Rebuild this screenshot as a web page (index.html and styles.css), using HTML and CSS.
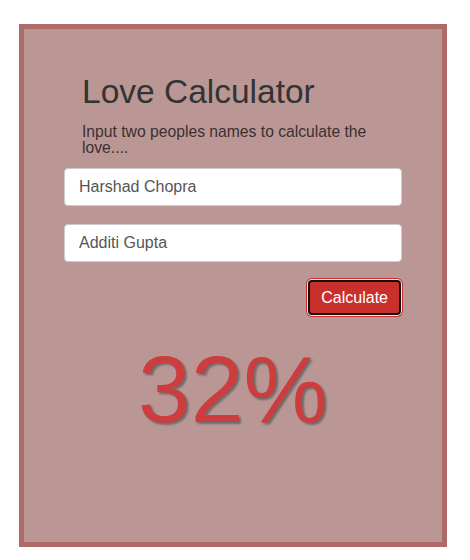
FILE: index.html
```html
<!DOCTYPE html>
<html>
<head>
<meta charset="utf-8">
<link rel="stylesheet" href="styles.css">
</head>
<body>
<div class="card">
  <div class="intro">
    <h1 class="title">Love Calculator</h1>
    <p class="lead">Input two peoples names to calculate the love....</p>
  </div>
  <div class="form">
    <input class="field" type="text" value="Harshad Chopra">
    <input class="field field-second" type="text" value="Additi Gupta">
    <div class="actions">
      <button class="btn">Calculate</button>
    </div>
  </div>
  <div class="result">32%</div>
</div>
</body>
</html>
```
FILE: styles.css
```css
html, body {
  margin: 0;
  padding: 0;
  background: #ffffff;
}
body {
  font-family: "Liberation Sans", Arial, sans-serif;
  color: #333333;
}
.card {
  box-sizing: border-box;
  margin: 24px 0 0 19px;
  width: 428px;
  height: 523px;
  border: 5px solid #ae6b68;
  background: #ba9795;
  padding: 45px 40px 0 40px;
}
.intro {
  padding: 0 18px;
}
.title {
  margin: 0;
  font-size: 33.5px;
  line-height: 36px;
  font-weight: normal;
  color: #333333;
}
.lead {
  margin: 14px 0 0 0;
  font-size: 15.7px;
  line-height: 16px;
  color: #3a3030;
}
.form {
  margin-top: 12px;
  display: flex;
  flex-direction: column;
}
.field {
  box-sizing: border-box;
  width: 338px;
  height: 38px;
  margin: 0;
  padding: 0 14px;
  border: 1px solid #cccccc;
  border-radius: 4px;
  background: #ffffff;
  font-family: "Liberation Sans", Arial, sans-serif;
  font-size: 16px;
  color: #555555;
  outline: none;
}
.field-second {
  margin-top: 18px;
}
.actions {
  display: flex;
  justify-content: flex-end;
  margin-top: 18px;
  padding-right: 1px;
}
.btn {
  box-sizing: border-box;
  height: 35px;
  padding: 0 11px;
  border: 2px solid #111111;
  border-radius: 4px;
  background: #c9302c;
  color: #ffffff;
  font-family: "Liberation Sans", Arial, sans-serif;
  font-size: 16px;
  box-shadow: 0 0 0 1px #f4e4e4, 0 0 0 2px #c9302c;
}
.result {
  margin-top: 26px;
  text-align: center;
  font-size: 95px;
  line-height: 96px;
  color: #cc3d3f;
  text-shadow: 2px 2px 2px #6d6d6d;
}
```
